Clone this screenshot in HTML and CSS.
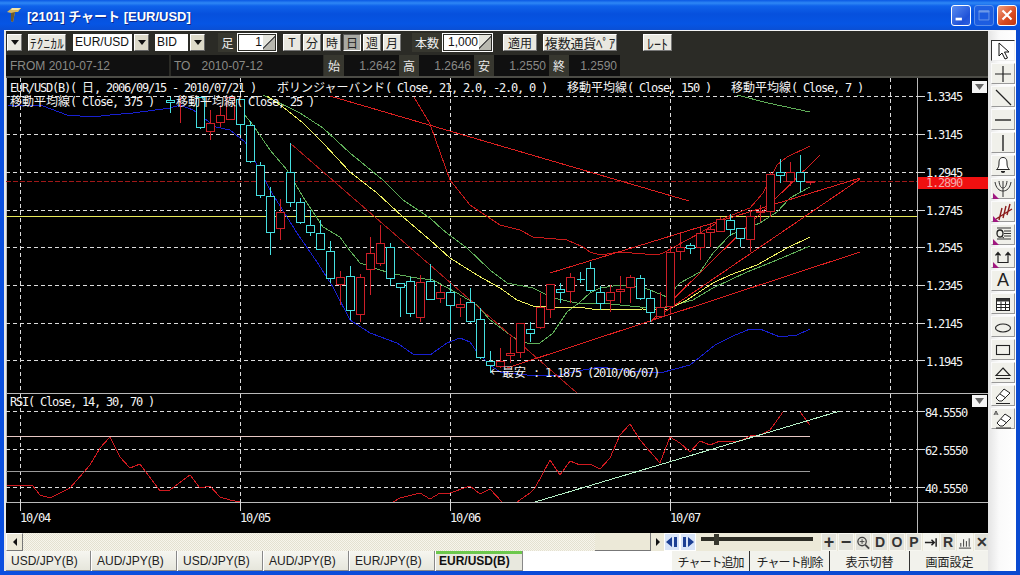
FILE: index.html
```html
<!DOCTYPE html>
<html lang="ja">
<head>
<meta charset="utf-8">
<title>[2101] チャート [EUR/USD]</title>
<link rel="stylesheet" href="styles.css">
</head>
<body>
<div class="window">
  <header class="titlebar">
    <svg class="appicon" width="16" height="16" viewBox="0 0 16 16"><path d="M1 5 L6 1 L15 1 L12 5 L9 5 L7 15 L5 14 L5 6 Z" fill="#d8b860"/><path d="M5 6 L9 5 L7 15 L5 14 Z" fill="#6b5a30"/><path d="M6 1 L15 1 L12 3 L5 3 Z" fill="#f4e4a8"/></svg>
    <span class="title">[2101] チャート [EUR/USD]</span>
    <div class="winbtns">
      <span class="winbtn"><svg width="20" height="20" viewBox="0 0 20 20"><rect x="4" y="13" width="7" height="3" fill="#fff"/></svg></span>
      <span class="winbtn dim"><svg width="20" height="20" viewBox="0 0 20 20"><path d="M4.500 5.500h11v10h-11z M4.500 6.500h11" fill="none" stroke="#a9c3ee" stroke-width="1"/><rect x="4" y="5" width="12" height="2" fill="#a9c3ee"/></svg></span>
      <span class="winbtn close"><svg width="20" height="20" viewBox="0 0 20 20"><path d="M5 5L15 15M15 5L5 15" stroke="#fff" stroke-width="2.400"/></svg></span>
    </div>
  </header>
  <div class="frame">
    <main class="main">
      <div class="toolbar">
        <button class="btn w-menu"><i class="tri"></i></button>
        <button class="btn w-tech">ﾃｸﾆｶﾙ</button>
        <span class="combo w-pair"><span class="field">EUR/USD</span><span class="drop"><i class="tri"></i></span></span>
        <span class="combo w-bid"><span class="field">BID</span><span class="drop"><i class="tri"></i></span></span>
        <span class="lbl w-ashi">足</span>
        <span class="spin w-spin1"><span class="val">1</span><span class="spinbtn"></span></span>
        <div class="segs">
          <button class="btn seg">T</button><button class="btn seg">分</button><button class="btn seg">時</button><button class="btn seg on">日</button><button class="btn seg">週</button><button class="btn seg">月</button>
        </div>
        <span class="lbl w-hon">本数</span>
        <span class="spin w-spin2"><span class="val">1,000</span><span class="spinbtn"></span></span>
        <button class="btn w-apply">適用</button>
        <button class="btn w-multi">複数通貨ﾍﾟｱ</button>
        <button class="btn w-rate">ﾚｰﾄ</button>
      </div>
      <div class="inforow">
        <span class="cell w-from">FROM 2010-07-12</span>
        <span class="cell w-to">TO<span class="date">2010-07-12</span></span>
        <span class="tag">始</span><span class="num">1.2642</span>
        <span class="tag">高</span><span class="num">1.2646</span>
        <span class="tag">安</span><span class="num">1.2550</span>
        <span class="tag">終</span><span class="num w-last">1.2590</span>
      </div>
      <svg class="chart" width="982" height="455" viewBox="6 78 982 455">
        <rect class="bg" x="6" y="78" width="982" height="455"/>
        <path class="frameline" d="M6.500 78V503M917.500 78V533M6 393.500H988M6 502.500H988"/>
        <path class="grid" d="M6 96.500H917M6 134.500H917M6 172.500H917M6 210.500H917M6 247.500H917M6 285.500H917M6 323.500H917M6 360.500H917M20.500 78V393M240.500 78V393M450.500 78V393M670.500 78V393M890.500 78V393M6 411.500H917M6 449.500H917M6 487.500H917M20.500 394V503M240.500 394V503M450.500 394V503M670.500 394V503M890.500 394V503"/>
        <path class="ticks" d="M917 96.500H925M917 134.500H925M917 172.500H925M917 210.500H925M917 247.500H925M917 285.500H925M917 323.500H925M917 360.500H925M917 411.500H925M917 449.500H925M917 487.500H925M20.500 503V511M240.500 503V511M450.500 503V511M670.500 503V511"/>
        <path class="rline" d="M6 181H917"/>
        <path class="yline" d="M6 216.500H917"/>
        <path class="rsi70" d="M6 436.500H810"/>
        <path class="rsi30" d="M6 471H810"/>

        <polyline class="blue" points="7,105 43,106 67,115 93,117 110,115 133,113 170,108 180,105 193,110 216,127 230,130 245,142 270,190 297,233 317,262 333,287 350,320 370,333 397,343 413,354 430,355 447,343 460,338 470,342 477,352 490,365 500,372 527,375 560,375 583,370 600,367 630,371 660,373 690,365 715,345 733,336 750,329 760,329 780,337 797,335 810,329"/>
        <polyline class="bb" points="414,97 430,124 450,180 470,205 500,225 520,230 533,237 567,240 583,247 590,252 600,255 620,252 657,255 663,253 700,233 727,217 750,208 763,193 777,165 787,157 810,146"/>
        <polyline class="green" points="737,95 768,103 810,112"/>
        <polyline class="green" points="243,113 253,125 270,150 287,170 303,197 323,227 340,237 347,247 360,263 377,269 390,273 400,275 417,278 433,280 457,293 477,305 490,320 513,337 527,343 540,343 553,333 567,312 580,302 590,293 600,288 620,285 640,287 650,290 667,297 680,283 700,272 713,253 730,235 743,230 760,223 777,212 790,198 810,187"/>
        <polyline class="green" points="263,95 300,113 323,128 350,153 383,180 403,200 430,218 443,230 467,248 490,270 507,283 533,288 553,298 577,303 600,303 640,307 667,307 693,300 713,288 747,272 777,260 810,246"/>
        <polyline class="yellow" points="267,96 283,107 303,123 323,143 350,172 377,193 403,217 430,240 450,258 477,275 500,288 517,300 533,306 553,307 577,307 600,310 643,309 667,310 687,300 713,283 730,275 757,265 787,248 810,237"/>

        <path class="trend" d="M330 96L689 201M507 368L860 252M550 273L860 178M650 322L820 155M650 322L860 179"/>
        <path class="trend dark" d="M290 143L577 393"/>

        <g class="cy">
          <path d="M170.500 97V113M200.500 97V129M240.500 99V135M250.500 121V163M260.500 162V198M270.500 187V255M290.500 143V207M300.500 198V224M310.500 210V236M320.500 220V250M330.500 241V283M350.500 266V320M390.500 243V286M400.500 283V317M410.500 277V317M430.500 264V299M450.500 283V330M470.500 288V323M480.500 308V359M490.500 351V373M530.500 322V342M560.500 283V303M580.500 272V283M590.500 262V292M600.500 286V310M640.500 275V300M650.500 290V322M690.500 243V254M730.500 214V236M740.500 228V247M780.500 159V183M800.500 155V192"/>
          <path class="body" d="M166.500 100h8v2h-8zM196.500 97h8v30h-8zM236.500 99h8v25h-8zM246.500 125h8v36h-8zM256.500 165h8v30h-8zM266.500 196h8v36h-8zM286.500 172h8v30h-8zM296.500 202h8v20h-8zM306.500 225h8v7h-8zM316.500 233h8v16h-8zM326.500 251h8v27h-8zM346.500 276h8v34h-8zM386.500 247h8v31h-8zM396.500 283h8v4h-8zM406.500 281h8v32h-8zM426.500 281h8v18h-8zM446.500 292h8v13h-8zM466.500 302h8v19h-8zM476.500 319h8v38h-8zM486.500 361h8v4h-8zM526.500 329h8v4h-8zM556.500 289h8v3h-8zM576.500 279h8v0h-8zM586.500 268h8v22h-8zM596.500 292h8v11h-8zM636.500 278h8v20h-8zM646.500 298h8v14h-8zM686.500 245h8v3h-8zM726.500 220h8v9h-8zM736.500 228h8v10h-8zM776.500 172h8v3h-8zM796.500 172h8v9h-8z"/>
        </g>
        <g class="rd">
          <path d="M180.500 97V123M210.500 110V140M220.500 105V127M230.500 97V119M280.500 199V240M340.500 271V305M360.500 274V322M370.500 237V295M380.500 225V266M420.500 275V322M440.500 285V303M460.500 298V317M500.500 348V368M510.500 337V363M520.500 323V358M540.500 293V329M550.500 284V318M570.500 273V303M610.500 285V312M620.500 276V303M630.500 275V303M660.500 292V316M670.500 246V315M680.500 234V260M700.500 226V260M710.500 223V247M720.500 217V232M750.500 210V252M760.500 205V222M770.500 172V217M790.500 162V186M810.500 181V185"/>
          <path class="body" d="M206.500 123h8v8h-8zM216.500 115h8v7h-8zM226.500 97h8v22h-8zM276.500 212h8v16h-8zM336.500 277h8v7h-8zM356.500 277h8v37h-8zM366.500 253h8v16h-8zM376.500 243h8v20h-8zM416.500 282h8v35h-8zM436.500 292h8v6h-8zM456.500 304h8v3h-8zM496.500 361h8v5h-8zM506.500 353h8v2h-8zM516.500 323h8v29h-8zM536.500 307h8v20h-8zM546.500 284h8v25h-8zM566.500 277h8v14h-8zM606.500 292h8v8h-8zM616.500 289h8v2h-8zM626.500 277h8v10h-8zM656.500 307h8v9h-8zM666.500 252h8v54h-8zM676.500 247h8v4h-8zM696.500 233h8v14h-8zM706.500 229h8v3h-8zM716.500 219h8v12h-8zM746.500 216h8v23h-8zM756.500 211h8v1h-8zM766.500 174h8v37h-8zM786.500 172h8v9h-8zM806.500 181h8v1h-8z"/>
        </g>

        <polyline class="rsi" points="7,485 32,485 40,495 50,498 70,488 90,465 100,448 110,437 120,457 130,468 140,464 160,491 170,490 190,475 200,488 210,486 220,497 230,500 240,502"/>
        <polyline class="rsi" points="393,502 400,498 420,493 430,499 440,493 450,493 470,486 480,494 490,489 502,502"/>
        <polyline class="rsi" points="517,502 530,493 535,488 550,460 560,475 570,461 580,465 590,464 600,469 610,458 620,435 630,424 640,440 660,463 670,437 680,443 690,452 700,441 710,445 720,441 740,441 750,436 760,435 770,430 783,412"/>
        <polyline class="rsi" points="800,412 810,425"/>
        <path class="rsitrend" d="M535 502L840 411"/>

        <rect class="lastbox" x="918" y="177" width="70" height="12"/>

        <text class="t" x="10" y="92">EUR/USD(B)(</text>
        <text class="j" x="82" y="92">日</text>
        <text class="t" x="94" y="92">, 2006/09/15 - 2010/07/21 )</text>
        <text class="j" x="277" y="92">ボリンジャーバンド</text>
        <text class="t" x="385" y="92">( Close, 21, 2.0, -2.0, 0 )</text>
        <text class="j" x="567" y="92">移動平均線</text>
        <text class="t" x="627" y="92">( Close, 150 )</text>
        <text class="j" x="731" y="92">移動平均線</text>
        <text class="t" x="791" y="92">( Close, 7 )</text>
        <text class="j" x="10" y="106">移動平均線</text>
        <text class="t" x="70" y="106">( Close, 375 )</text>
        <text class="j" x="176" y="106">移動平均線</text>
        <text class="t" x="236" y="106">( Close, 25 )</text>

        <text class="j" x="490" y="377">←最安</text>
        <text class="t" x="533" y="377">: 1.1875 (2010/06/07)</text>

        <text class="t" x="10" y="406">RSI( Close, 14, 30, 70 )</text>

        <text class="t" x="926" y="101">1.3345</text>
        <text class="t" x="926" y="139">1.3145</text>
        <text class="t" x="926" y="177">1.2945</text>
        <text class="t last" x="926" y="187">1.2890</text>
        <text class="t" x="926" y="215">1.2745</text>
        <text class="t" x="926" y="252">1.2545</text>
        <text class="t" x="926" y="290">1.2345</text>
        <text class="t" x="926" y="328">1.2145</text>
        <text class="t" x="926" y="366">1.1945</text>
        <text class="t" x="925" y="417">84.5550</text>
        <text class="t" x="925" y="455">62.5550</text>
        <text class="t" x="925" y="493">40.5550</text>
        <text class="t" x="20" y="522">10/04</text>
        <text class="t" x="240" y="522">10/05</text>
        <text class="t" x="450" y="522">10/06</text>
        <text class="t" x="670" y="522">10/07</text>

        <rect class="menubox" x="972" y="81" width="15" height="12"/>
        <path class="menutri" d="M975 84H984L979.500 90Z"/>
        <rect class="menubox" x="972" y="395" width="15" height="12"/>
        <path class="menutri" d="M975 398H984L979.500 404Z"/>
      </svg>
      <div class="scrollrow">
        <span class="sbtn"><i class="arrow-l"></i></span>
        <div class="track"><span class="thumb"></span></div>
        <span class="sbtn-r"><i class="arrow-r"></i></span>
        <span class="nav"><svg width="14" height="14" viewBox="0 0 14 14"><path d="M7 2V12L1 7Z M9 2H12V12H9Z" fill="#1c3f94"/></svg></span>
        <span class="nav"><svg width="14" height="14" viewBox="0 0 14 14"><path d="M2 2H5V12H2Z M7 2L13 7L7 12Z" fill="#1c3f94"/></svg></span>
        <div class="slider"><span class="slider-line"></span><span class="slider-knob"></span></div>
        <div class="tools">
          <span class="tool big">+</span><span class="tool big">−</span>
          <span class="tool"><svg width="15" height="15" viewBox="0 0 15 15"><circle cx="6.500" cy="6.500" r="4.500" fill="none" stroke="#444" stroke-width="1.400"/><path d="M10 10L14 14" stroke="#444" stroke-width="2"/><path d="M4 6.500H9M6.500 4V9" stroke="#444"/></svg></span>
          <span class="tool">D</span><span class="tool">O</span><span class="tool">P</span>
          <span class="tool light"><svg width="15" height="15" viewBox="0 0 15 15"><path d="M1 7.500H11M8 4.500L11 7.500L8 10.500M13 3V12" fill="none" stroke="#222" stroke-width="1.600"/></svg></span>
          <span class="tool">R</span>
          <span class="tool light"><svg width="15" height="15" viewBox="0 0 15 15"><path d="M1 13.500H14M3 12V8M6 12V4M9 12V6M12 12V3" stroke="#333" fill="none"/></svg></span>
          <span class="tool">✕</span>
        </div>
      </div>
      <div class="tabrow">
        <span class="tab">USD/JPY(B)</span>
        <span class="tab">AUD/JPY(B)</span>
        <span class="tab">USD/JPY(B)</span>
        <span class="tab">AUD/JPY(B)</span>
        <span class="tab">EUR/JPY(B)</span>
        <span class="tab active">EUR/USD(B)</span>
        <span class="tabfill"></span>
        <span class="act tight w-a1">チャート追加</span>
        <span class="act tight w-a2">チャート削除</span>
        <span class="act w-a3">表示切替</span>
        <span class="act w-a4">画面設定</span>
      </div>
    </main>
    <aside class="side">
      <span class="ib sel"><svg width="20" height="20" viewBox="0 0 20 20"><path d="M6 2V15L9 12L12 18L14.500 17L11.500 11H16Z" fill="#fff" stroke="#111"/></svg></span>
      <span class="ib"><svg width="20" height="20" viewBox="0 0 20 20"><path d="M10 2V18M2 10H18" stroke="#222" stroke-width="1.200"/></svg></span>
      <span class="ib"><svg width="20" height="20" viewBox="0 0 20 20"><path d="M3 3L18 18" stroke="#222" stroke-width="1.200"/></svg></span>
      <span class="ib"><svg width="20" height="20" viewBox="0 0 20 20"><path d="M2 10H18" stroke="#222" stroke-width="1.400"/></svg></span>
      <span class="ib"><svg width="20" height="20" viewBox="0 0 20 20"><path d="M10 2V18" stroke="#222" stroke-width="1.400"/></svg></span>
      <span class="ib"><svg width="20" height="20" viewBox="0 0 20 20"><path d="M10 1.500C6.500 1.500 6 4.500 6 7C6 10 5.500 12 3.500 13.500H16.500C14.500 12 14 10 14 7C14 4.500 13.500 1.500 10 1.500ZM8 15.500A2.500 2.500 0 0 0 12 15.500Z" fill="#fff" stroke="#222"/></svg></span>
      <span class="ib"><svg width="20" height="20" viewBox="0 0 20 20"><path d="M2 3C3 9 6 12 10 12C14 12 17 9 18 3M6 2C6.500 7 8 9 10 9C12 9 13.500 7 14 2M10 2V18" fill="none" stroke="#333"/><path d="M0 20V14L6 20Z" fill="#a01880"/></svg></span>
      <span class="ib"><svg width="20" height="20" viewBox="0 0 20 20"><path d="M3 17L19 7M6 18L9 6M10 16L13 4M14 13L17 2" fill="none" stroke="#8b1a1a" stroke-width="1.400"/><path d="M0 20V14L6 20Z" fill="#a01880"/></svg></span>
      <span class="ib"><svg width="20" height="20" viewBox="0 0 20 20"><path d="M4 3H18M4 14H18M11 6H18M11 8.500H18M11 11H18" stroke="#333"/><ellipse cx="7" cy="8.500" rx="3" ry="3.500" fill="none" stroke="#222" stroke-width="1.300"/><path d="M8 11L11 13" stroke="#222"/><path d="M0 20V14L6 20Z" fill="#a01880"/></svg></span>
      <span class="ib"><svg width="20" height="20" viewBox="0 0 20 20"><path d="M5 15V5M2.500 7.500L5 4.500L7.500 7.500M15 15V5M12.500 7.500L15 4.500L17.500 7.500M5 14.500H15" fill="none" stroke="#222" stroke-width="1.200"/><path d="M0 20V14L6 20Z" fill="#a01880"/></svg></span>
      <span class="ib letter">A</span>
      <span class="ib"><svg width="20" height="20" viewBox="0 0 20 20"><rect x="3.500" y="4.500" width="13" height="12" fill="#fff" stroke="#222"/><rect x="3.500" y="4.500" width="13" height="3" fill="#333"/><path d="M3.500 10.500H16.500M3.500 13.500H16.500M8 7.500V16.500M12.500 7.500V16.500" stroke="#222"/></svg></span>
      <span class="ib"><svg width="20" height="20" viewBox="0 0 20 20"><ellipse cx="10" cy="11" rx="7.500" ry="4" fill="none" stroke="#222" stroke-width="1.100"/></svg></span>
      <span class="ib"><svg width="20" height="20" viewBox="0 0 20 20"><rect x="3.500" y="5.500" width="13" height="9" fill="none" stroke="#222" stroke-width="1.100"/></svg></span>
      <span class="ib"><svg width="20" height="20" viewBox="0 0 20 20"><path d="M10 5L17 12.500H3Z" fill="none" stroke="#222" stroke-width="1.100"/><path d="M3 15.500H17" stroke="#222" stroke-width="1.100"/></svg></span>
      <span class="ib"><svg width="20" height="20" viewBox="0 0 20 20"><path d="M3 12L11 3L17 7L9 15H6Z" fill="#fff" stroke="#222"/><path d="M7 8L13 12" stroke="#222"/><path d="M3 17.500H17" stroke="#222"/></svg></span>
      <span class="ib"><svg width="20" height="20" viewBox="0 0 20 20"><path d="M4 14L12 5L18 9L10 17H7Z" fill="#fff" stroke="#222"/><path d="M8 10L14 14" stroke="#222"/><path d="M3 19H18" stroke="#222"/><path d="M1 6L3 2L5 6M2 5H4" fill="none" stroke="#222" stroke-width=".8"/></svg></span>
    </aside>
  </div>
</div>
</body>
</html>
```

FILE: styles.css
```css
* { box-sizing: border-box; }
html, body { margin: 0; padding: 0; background: #0a3ac0; }
body { width: 1020px; height: 575px; overflow: hidden; font: 12px "Liberation Sans", "Noto Sans CJK JP", sans-serif; color: #111; }
button { font: inherit; padding: 0; margin: 0; }
.window { width: 1020px; height: 575px; display: flex; flex-direction: column; background: linear-gradient(90deg, #0a4fe0, #0a4ad6 60%, #0a4ad0); }

.titlebar { height: 30px; display: flex; align-items: center; padding: 0 3px 0 6px; background: linear-gradient(180deg, #0a58e4 0, #2e87f5 3px, #0f62ea 6px, #0650dd 14px, #0655e4 24px, #0a4fd4 30px); }
.appicon { flex: none; margin-right: 5px; }
.title { color: #fff; font-weight: bold; font-size: 13px; text-shadow: 1px 1px 0 #0a2a90; }
.winbtns { margin-left: auto; display: flex; gap: 3px; }
.winbtn { width: 20px; height: 21px; border: 1px solid #fff; border-radius: 3px; background: linear-gradient(135deg, #5a8cf0, #1f52d8 70%, #2f62e0); display: flex; align-items: center; justify-content: center; }
.winbtn.dim { opacity: .62; background: #2a62e0; border-color: #8ab0f0; }
.winbtn.close { background: linear-gradient(135deg, #f0a080, #d84a20 60%, #c03810); }

.frame { flex: 1; display: flex; margin: 0 4px 4px; border-top: 1px solid #f4f4f4; border-left: 2px solid #e8e8e8; min-height: 0; }
.main { width: 982px; display: flex; flex-direction: column; background: #2b2b26; }

.toolbar { height: 24px; display: flex; align-items: center; padding: 0 0 1px 1px; background: #2b2b26; flex: none; }
.btn { height: 17px; border: 1px solid; border-color: #fff #777 #777 #fff; background: #e9e8e0; color: #222; display: inline-flex; align-items: center; justify-content: center; flex: none; }
.tri { display: block; width: 0; height: 0; border-left: 4px solid transparent; border-right: 4px solid transparent; border-top: 5px solid #111; }
.w-menu { width: 15px; margin-right: 6px; }
.w-tech { width: 38px; margin-right: 7px; font-size: 13px; letter-spacing: .3px; }
.combo { display: flex; height: 17px; flex: none; }
.field { background: #fff; color: #111; padding: 0 0 0 2px; line-height: 16px; flex: 1; }
.drop { width: 15px; margin-left: 2px; background: #dcd9c8; border: 1px solid; border-color: #fff #666 #666 #fff; display: flex; align-items: center; justify-content: center; }
.w-pair { width: 76px; margin-right: 6px; }
.w-bid { width: 50px; margin-right: 13px; }
.lbl { height: 19px; background: #37372f; color: #eee; display: inline-flex; align-items: center; justify-content: center; flex: none; font-size: 12px; }
.w-ashi { width: 19px; }
.w-hon { width: 30px; margin-left: 11px; }
.spin { height: 19px; border: 1px solid #fff; background: #2b2b26; padding: 1px; display: flex; flex: none; }
.val { flex: 1; background: #fff; color: #111; text-align: right; line-height: 15px; padding-right: 1px; }
.spinbtn { width: 12px; background: linear-gradient(135deg, #e4e4dc 0 46%, #555 46% 54%, #b8b8b0 54%); }
.w-spin1 { width: 40px; margin-right: 6px; }
.w-spin2 { width: 51px; margin-right: 10px; }
.segs { display: flex; gap: 2px; flex: none; }
.seg { width: 18px; }
.seg.on { background: #a9a9a3; border-color: #555 #fff #fff #555; }
.w-apply { width: 34px; margin-right: 6px; }
.w-multi { width: 74px; margin-right: 26px; font-size: 13px; letter-spacing: -.2px; }
.w-rate { width: 29px; font-size: 14px; }

.inforow { height: 23px; display: flex; background: #2b2b26; flex: none; border-bottom: 2px solid #4c4c46; font-size: 12px; color: #8a8a86; }
.cell, .num { background: #101010; display: flex; align-items: center; flex: none; }
.w-from { width: 163px; padding-left: 4px; margin-right: 2px; }
.w-to { width: 152px; padding-left: 3px; margin-right: 1px; }
.date { margin-left: 11px; }
.tag { width: 20px; background: #37372f; color: #e8e8e8; display: flex; align-items: center; justify-content: center; flex: none; font-size: 12px; }
.num { width: 55px; justify-content: flex-end; padding-right: 3px; }
.num.w-last { width: 51px; }

.chart { display: block; flex: none; width: 982px; height: 455px; }
.bg { fill: #000; }
.frameline { stroke: #b9b9b9; fill: none; shape-rendering: crispEdges; }
.grid { stroke: #dcdcdc; stroke-dasharray: 4 3; fill: none; shape-rendering: crispEdges; }
.ticks { stroke: #d8d8d8; fill: none; shape-rendering: crispEdges; }
.rline { stroke: #a01818; stroke-dasharray: 5 2; fill: none; shape-rendering: crispEdges; }
.yline { stroke: #e8e85a; fill: none; shape-rendering: crispEdges; }
.rsi70 { stroke: #e8c8c4; fill: none; shape-rendering: crispEdges; }
.rsi30 { stroke: #9a9a9a; fill: none; shape-rendering: crispEdges; }
.blue, .bb, .green, .yellow, .trend, .rsi, .rsitrend { fill: none; stroke-width: 1; shape-rendering: crispEdges; }
.blue { stroke: #1820d0; }
.bb { stroke: #c81a1a; }
.green { stroke: #5fae58; }
.yellow { stroke: #eef060; }
.trend { stroke: #dc2020; }
.trend.dark { stroke: #a81818; }
.cy path { fill: none; stroke: #45dfe0; shape-rendering: crispEdges; }
.rd path { fill: none; stroke: #cc1f28; shape-rendering: crispEdges; }
.cy .body, .rd .body { fill: #000; }
.rsi { stroke: #d01a20; }
.rsitrend { stroke: #b6f2c8; }
.lastbox { fill: #f01010; }
.t { fill: #f4f4f4; font: 12px "DejaVu Sans Mono", "Liberation Mono", monospace; letter-spacing: -1.22px; white-space: pre; }
.t.last { fill: #f4a8a8; }
.j { fill: #f4f4f4; font: 12px "Noto Sans CJK JP", sans-serif; }
.menubox { fill: #f4f4f4; }
.menutri { fill: #666; }

.scrollrow { height: 18px; display: flex; align-items: stretch; background: #ece9d8; flex: none; }
.sbtn { width: 17px; background: #ece9d8; border: 1px solid; border-color: #fff #777 #777 #fff; display: flex; align-items: center; justify-content: center; flex: none; }
.arrow-l { width: 0; height: 0; border-top: 4px solid transparent; border-bottom: 4px solid transparent; border-right: 4px solid #111; }
.arrow-r { width: 0; height: 0; border-top: 4px solid transparent; border-bottom: 4px solid transparent; border-left: 4px solid #111; }
.track { width: 628px; display: flex; background: repeating-conic-gradient(#f7f5ec 0 25%, #e4e1d0 0 50%) 0 0 / 2px 2px; flex: none; }
.thumb { width: 56px; margin-left: auto; background: #ece9d8; border-right: 1px solid #777; border-bottom: 1px solid #777; }
.sbtn-r { width: 13px; display: flex; align-items: center; justify-content: center; background: #ece9d8; flex: none; }
.nav { width: 16px; display: flex; align-items: center; justify-content: center; background: #d8e4f8; border: 1px solid #fff; flex: none; }
.slider { width: 121px; margin-left: 4px; position: relative; background: #ece9d8; flex: none; }
.slider-line { position: absolute; left: 1px; right: 8px; top: 4px; height: 4px; background: #2e2e26; }
.slider-knob { position: absolute; left: 14px; top: 1px; width: 5px; height: 11px; background: #38382e; }
.tools { display: flex; flex: 1; gap: 1px; padding-right: 1px; justify-content: flex-end; }
.tool { width: 16px; background: #e2e2da; color: #333; font-size: 14px; font-weight: bold; display: flex; align-items: center; justify-content: center; line-height: 1; border: 1px solid #f6f6f0; }
.tool.big { font-size: 18px; }
.tool.light { background: #f4f4ee; }

.tabrow { height: 20px; display: flex; align-items: stretch; background: #fff; flex: none; }
.tab { width: 85px; background: linear-gradient(180deg, #f6f6f0, #e6e6dc); border-right: 1px solid #888; border-bottom: 1px solid #888; margin-right: 1px; padding-left: 5px; display: flex; align-items: center; color: #222; font-size: 12px; flex: none; }
.tab.active { width: 87px; margin-right: 0; padding-left: 3px; font-weight: bold; background: linear-gradient(180deg, #6cc84c 0 3px, #e8e8de 3px); color: #111; }
.tabfill { width: 149px; background: #fff; flex: none; }
.act { background: #f2f2ec; border-right: 1px solid #333; display: flex; align-items: center; justify-content: center; color: #222; font-size: 12px; flex: none; }
.tight { letter-spacing: -1px; }
.w-a1 { width: 78px; }
.w-a2 { width: 80px; }
.w-a3 { width: 80px; }
.w-a4 { width: 80px; }

.side { width: 28px; background: linear-gradient(90deg, #e4e4e4, #fafafa 40%, #fff); display: flex; flex-direction: column; gap: 2px; padding: 9px 1px 0 3px; flex: none; }
.ib { width: 24px; height: 21px; background: #f0f0ea; border: 1px solid; border-color: #fafafa #999 #999 #fafafa; display: flex; align-items: center; justify-content: center; flex: none; }
.ib.sel { border-color: #333 #eee #eee #333; background: #fff; }
.letter { font: 18px "Liberation Sans", sans-serif; color: #222; }
```
